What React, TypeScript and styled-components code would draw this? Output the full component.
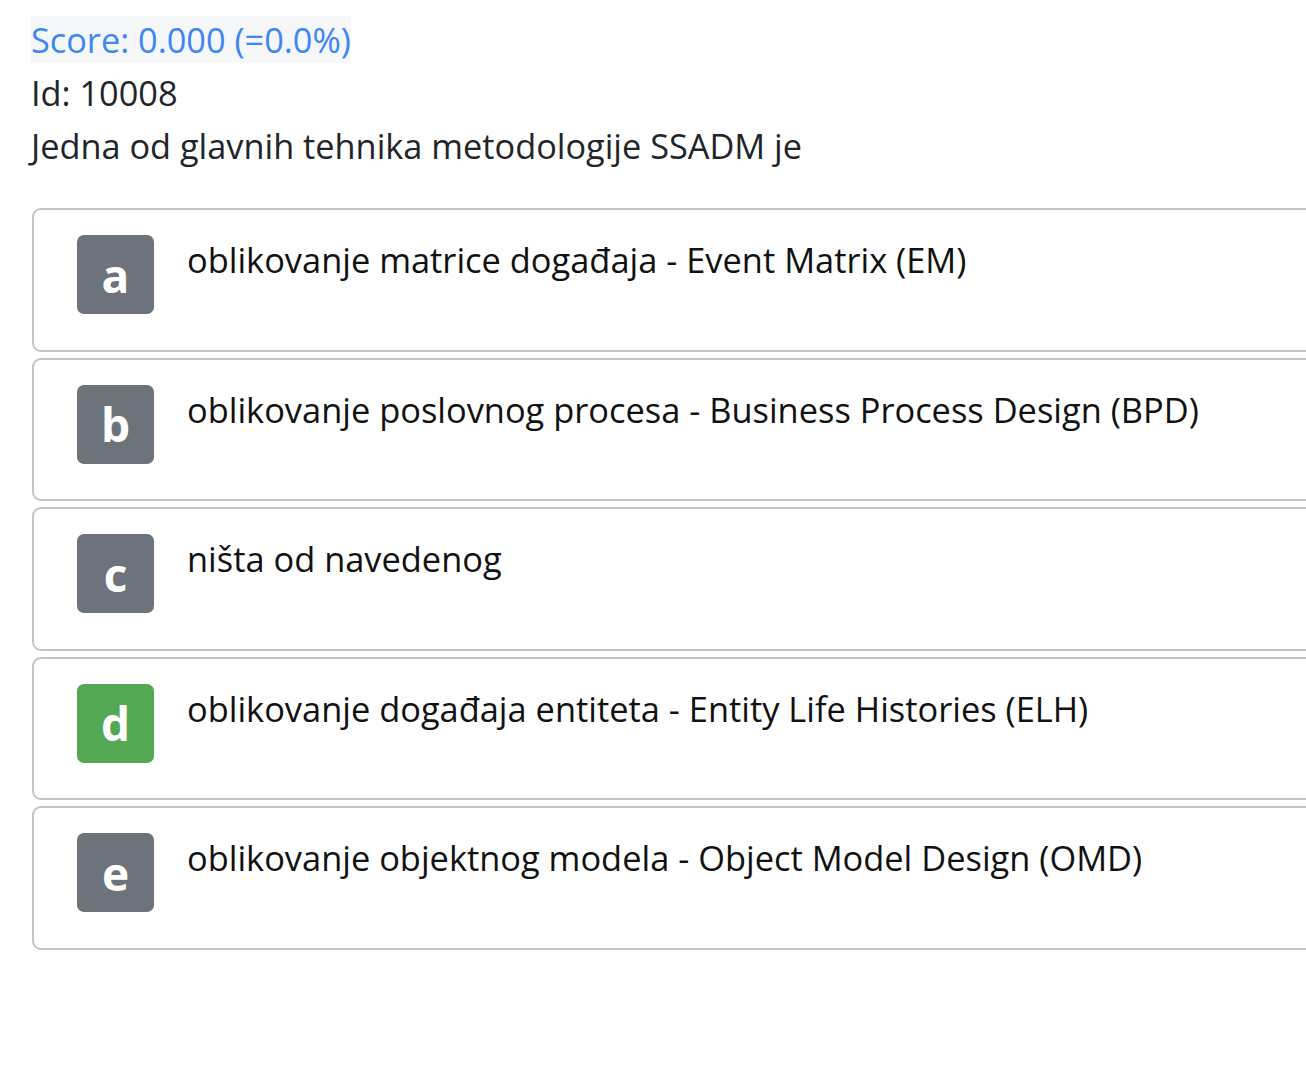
import styled, { createGlobalStyle } from 'styled-components';

type Option = {
  letter: string;
  text: string;
  correct?: boolean;
};

const options: Option[] = [
  { letter: 'a', text: 'oblikovanje matrice događaja - Event Matrix (EM)' },
  { letter: 'b', text: 'oblikovanje poslovnog procesa - Business Process Design (BPD)' },
  { letter: 'c', text: 'ništa od navedenog' },
  { letter: 'd', text: 'oblikovanje događaja entiteta - Entity Life Histories (ELH)', correct: true },
  { letter: 'e', text: 'oblikovanje objektnog modela - Object Model Design (OMD)' },
];

export default function App() {
  return (
    <>
      <GlobalStyle />
      <Page>
        <Header>
          <Line>
            <Score>Score: 0.000 (=0.0%)</Score>
          </Line>
          <Line>Id: 10008</Line>
          <Line>Jedna od glavnih tehnika metodologije SSADM je</Line>
        </Header>

        <Options>
          {options.map((option) => (
            <OptionCard key={option.letter}>
              <Badge $correct={option.correct}>{option.letter}</Badge>
              <OptionText>{option.text}</OptionText>
            </OptionCard>
          ))}
        </Options>
      </Page>
    </>
  );
}

const GlobalStyle = createGlobalStyle`
  html, body {
    margin: 0;
    padding: 0;
    background: #fff;
    overflow: hidden;
  }

  body {
    font-family: 'Open Sans', 'Noto Sans', sans-serif;
    color: #212529;
  }
`;

const Page = styled.main`
  padding: 13px 0 0 31px;
  width: 1400px;
`;

const Header = styled.div`
  display: flex;
  flex-direction: column;
  font-size: 34.3px;
`;

const Line = styled.div`
  line-height: 53px;
  white-space: nowrap;
`;

const Score = styled.span`
  color: #3d86f5;
  background: #f6f7f9;
`;

const Options = styled.div`
  margin-top: 36px;
  margin-left: 1px;
  display: flex;
  flex-direction: column;
  gap: 6px;
`;

const OptionCard = styled.div`
  display: flex;
  align-items: flex-start;
  gap: 33px;
  box-sizing: border-box;
  height: 143.5px;
  padding: 25px 0 0 43px;
  border: 2px solid #c4c4c4;
  border-radius: 9px;
`;

const Badge = styled.div<{ $correct?: boolean }>`
  flex-shrink: 0;
  width: 77px;
  height: 79px;
  border-radius: 7px;
  display: flex;
  align-items: center;
  justify-content: center;
  background: ${({ $correct }) => ($correct ? '#54a853' : '#6c737b')};
  color: #fff;
  font-size: 46px;
  font-weight: 700;
  line-height: 1;
`;

const OptionText = styled.div`
  font-size: 34.4px;
  line-height: 50px;
  color: #111;
  white-space: nowrap;
`;
